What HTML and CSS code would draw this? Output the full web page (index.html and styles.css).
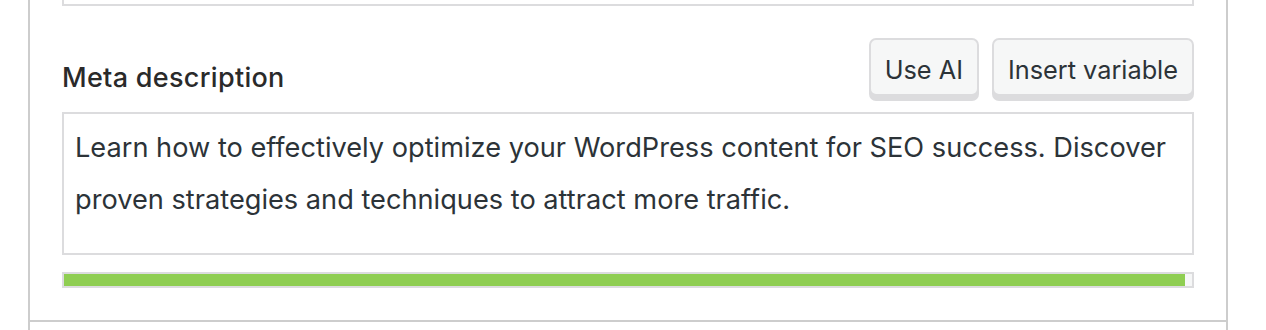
FILE: index.html
```html
<!DOCTYPE html>
<html lang="en">
<head>
<meta charset="utf-8">
<title>Meta description</title>
<link rel="stylesheet" href="styles.css">
</head>
<body>
<div class="panel">
  <div class="section">
    <div class="prev-input"></div>
    <div class="field-head">
      <label class="field-label" for="meta">Meta description</label>
      <div class="actions">
        <button class="btn" type="button">Use AI</button>
        <button class="btn" type="button">Insert variable</button>
      </div>
    </div>
    <div class="textarea" id="meta">Learn how to effectively optimize your WordPress content for SEO success. Discover proven strategies and techniques to attract more traffic.</div>
    <div class="progress"><div class="progress-fill" style="width: 99.4%"></div></div>
  </div>
</div>
</body>
</html>
```

FILE: styles.css
```css
html, body {
  margin: 0;
  padding: 0;
  background: #ffffff;
}
body {
  font-family: Inter, "Noto Sans", "Liberation Sans", sans-serif;
  color: #2c3338;
  height: 330px;
  overflow: hidden;
}
.panel {
  margin-left: 28px;
  width: 1200px;
  box-sizing: border-box;
  border-left: 2px solid #cdcdcd;
  border-right: 2px solid #cdcdcd;
  height: 330px;
}
.section {
  padding: 0 32px;
  height: 322px;
  box-sizing: border-box;
  border-bottom: 2px solid #cdcdcd;
}
.prev-input {
  height: 6px;
  box-sizing: border-box;
  border: 2px solid #dcdcde;
  border-top: none;
}
.field-head {
  display: flex;
  justify-content: space-between;
  align-items: flex-end;
  margin-top: 32px;
}
.field-label {
  font-size: 27px;
  letter-spacing: 0.3px;
  line-height: 32px;
  font-weight: 500;
  color: #2a2a2a;
  margin-bottom: 7px;
}
.actions {
  display: flex;
  gap: 13px;
}
.btn {
  font-family: inherit;
  font-size: 25.3px;
  line-height: 32px;
  color: #2c3338;
  background: #f6f7f7;
  border: 2px solid #dcdcde;
  border-radius: 7px;
  padding: 14px 14px 8px;
  height: 58px;
  box-sizing: border-box;
  box-shadow: 0 5px 0 #dcdcde;
  margin-bottom: 5px;
}
.textarea {
  margin-top: 11px;
  height: 143px;
  box-sizing: border-box;
  border: 2px solid #dcdcde;
  padding: 8px 11px;
  font-size: 27.2px;
  line-height: 52px;
  color: #2c3338;
}
.progress {
  margin-top: 17px;
  height: 16px;
  box-sizing: border-box;
  border: 2px solid #dcdcde;
  background: #f6f7f7;
}
.progress-fill {
  height: 100%;
  background: #8fce52;
}
```
